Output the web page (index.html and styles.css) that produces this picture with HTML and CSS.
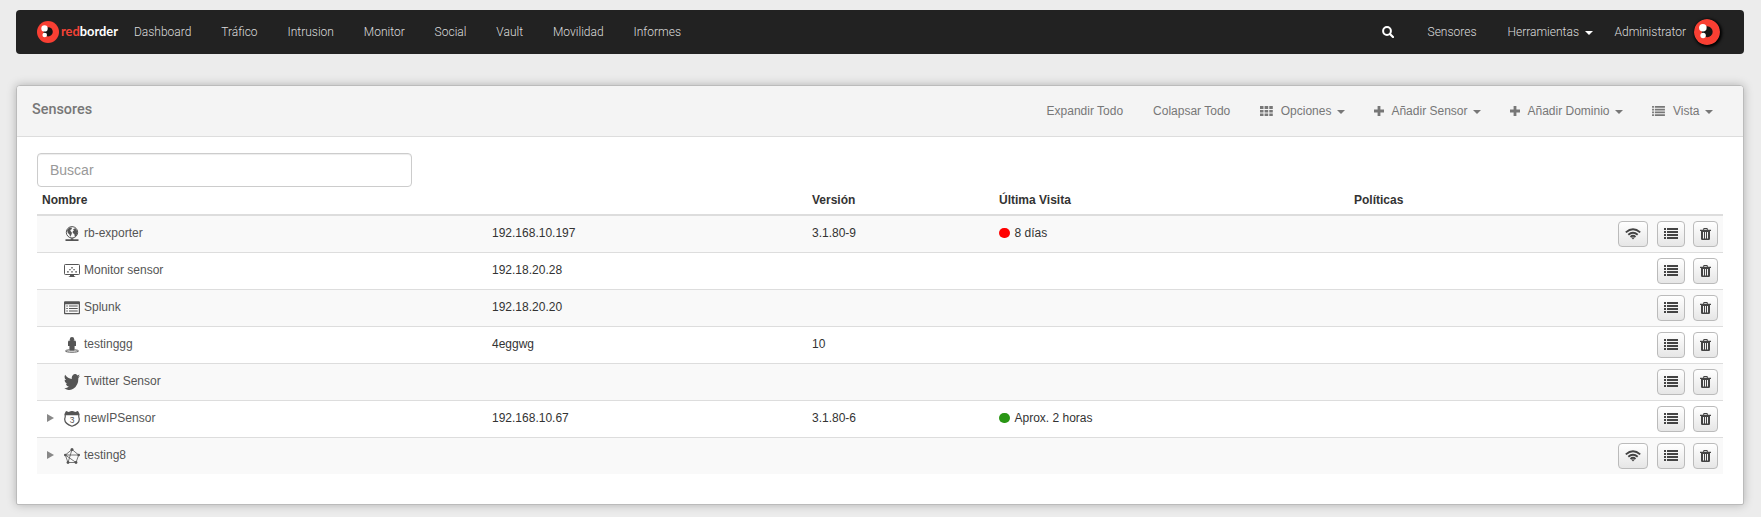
FILE: index.html
```html
<!DOCTYPE html>
<html lang="es">
<head>
<meta charset="utf-8">
<title>Sensores</title>
<link rel="stylesheet" href="styles.css">
</head>
<body>
<svg class="defs" width="0" height="0" aria-hidden="true">
  <symbol id="mark" viewBox="0 0 22 22">
    <circle cx="11" cy="11" r="11" fill="#f93f33"/>
    <circle cx="11.200" cy="10.800" r="4.600" fill="#151515"/>
    <circle cx="7.500" cy="7.400" r="3.200" fill="#fff"/>
    <circle cx="7.700" cy="14" r="2.300" fill="#fff"/>
  </symbol>
  <symbol id="list" viewBox="0 0 14 12">
    <path d="M0 0h2v2H0zM3 0h11v2H3zM0 3h2v2H0zM3 3h11v2H3zM0 6h2v2H0zM3 6h11v2H3zM0 9h2v2H0zM3 9h11v2H3z"/>
  </symbol>
  <symbol id="trash" viewBox="0 0 11 12">
    <path fill-rule="evenodd" d="M3.2 1.8V.9Q3.2 0 4.1 0h2.8q.9 0 .9.9v.9H11V3h-1v7.8Q10 12 8.8 12H2.2Q1 12 1 10.800V3H0V1.800zM4.200 1.800h2.600V1H4.200zM3 4v6.500h1V4zM5 4v6.500h1V4zM7 4v6.500h1V4z"/>
  </symbol>
  <symbol id="wifi" viewBox="0 0 16 12">
    <g fill="none" stroke="currentColor" stroke-width="1.9"><path d="M.8 4.400Q8-1.900 15.200 4.400"/><path d="M3.300 6.800Q8 2.800 12.700 6.800"/><path d="M5.500 8.900Q8 6.800 10.500 8.900"/></g>
    <path d="M6.400 9.800Q8 8.900 9.600 9.800L8 11.500z"/>
  </symbol>
  <symbol id="plus" viewBox="0 0 10 10"><path d="M3.600 0h2.800v3.600H10v2.800H6.400V10H3.600V6.400H0V3.600h3.600z"/></symbol>
  <symbol id="grid" viewBox="0 0 13 11">
    <path d="M0 0h3.500v3H0zM4.600 0h3.600v3H4.600zM9.300 0h3.500v3H9.300zM0 3.900h3.500v2.700H0zM4.600 3.900h3.600v2.700H4.600zM9.300 3.900h3.500v2.700H9.300zM0 7.400h3.500v2.700H0zM4.600 7.400h3.600v2.700H4.600zM9.300 7.400h3.500v2.700H9.300z"/>
  </symbol>
</svg>

<nav class="navbar">
  <a class="brand"><svg class="brand-mark"><use href="#mark"/></svg><svg class="brand-name" viewBox="0 0 58 20"><text class="brand-text" x="0" y="14" textLength="57" lengthAdjust="spacingAndGlyphs"><tspan class="red">red</tspan><tspan>border</tspan></text></svg></a>
  <div class="menu">
    <a>Dashboard</a><a>Tráfico</a><a>Intrusion</a><a>Monitor</a><a>Social</a><a>Vault</a><a>Movilidad</a><a>Informes</a>
  </div>
  <div class="menu menu-right">
    <a class="search"><svg width="12" height="12" viewBox="0 0 12 12"><circle cx="5" cy="5" r="3.900" fill="none" stroke="#fff" stroke-width="2"/><path d="M8 8l3 3" stroke="#fff" stroke-width="2.200" stroke-linecap="round"/></svg></a>
    <a>Sensores</a><a class="tools">Herramientas<i class="caret"></i></a><a class="admin">Administrator</a>
    <svg class="avatar"><use href="#mark"/></svg>
  </div>
</nav>

<section class="panel">
  <header class="panel-head">
    <h1>Sensores</h1>
    <div class="toolbar">
      <a>Expandir Todo</a>
      <a>Colapsar Todo</a>
      <a><svg class="ic-grid"><use href="#grid"/></svg>Opciones<i class="caret"></i></a>
      <a><svg class="ic-plus"><use href="#plus"/></svg>Añadir Sensor<i class="caret"></i></a>
      <a><svg class="ic-plus"><use href="#plus"/></svg>Añadir Dominio<i class="caret"></i></a>
      <a><svg class="ic-list"><use href="#list"/></svg>Vista<i class="caret"></i></a>
    </div>
  </header>
  <div class="panel-body">
    <input class="filter" type="text" placeholder="Buscar">
    <table class="sensors">
      <colgroup><col class="c-name"><col class="c-ip"><col class="c-version"><col class="c-visit"><col class="c-policy"><col></colgroup>
      <thead><tr><th>Nombre</th><th></th><th>Versión</th><th>Última Visita</th><th>Políticas</th><th></th></tr></thead>
      <tbody>
        <tr>
          <td><div class="name"><i class="toggle"></i><svg viewBox="0 0 16 16"><circle cx="8" cy="6.300" r="5.700" fill="none" stroke="currentColor"/><path d="M3 4.200L5.500 1.500 8 1.800 7.600 3.300 6.200 4.100 6.900 5.500 8 6.700 7.300 8.900 6.200 10.800 5.300 8.300 3.800 7 3.400 5.300zM9 3.200L11.200 2.300 13.300 5 13.400 7.500 12 10 10.800 10.800 10.300 8.100 8.700 7 8.800 5.300 10 4.500z"/><path d="M1.500 13.200h5.300v-1h2.500v1h5.200v1.900H1.500z"/></svg>rb-exporter</div></td>
          <td>192.168.10.197</td><td>3.1.80-9</td><td><div class="visit"><i class="dot down"></i>8 días</div></td><td></td>
          <td class="actions"><div><button class="b-wifi"><svg><use href="#wifi"/></svg></button><button class="b-list"><svg><use href="#list"/></svg></button><button class="b-trash"><svg><use href="#trash"/></svg></button></div></td>
        </tr>
        <tr>
          <td><div class="name"><i class="toggle"></i><svg viewBox="0 0 16 16"><rect x=".5" y="1.500" width="15" height="10" rx=".8" fill="none" stroke="currentColor"/><path d="M6 12h4v1.200h1.200V14H4.800v-.8H6zM7.300 4h1.400v1.400H7.300zM5.300 6h1.300v1.300H5.300zM9.400 6h1.300v1.300H9.400zM3 8.200h1.800v1.200H3zM7.200 8.200h1.600v1.200H7.200zM11.200 8.200H13v1.200h-1.800z"/></svg>Monitor sensor</div></td>
          <td>192.18.20.28</td><td></td><td></td><td></td>
          <td class="actions"><div><button class="b-list"><svg><use href="#list"/></svg></button><button class="b-trash"><svg><use href="#trash"/></svg></button></div></td>
        </tr>
        <tr>
          <td><div class="name"><i class="toggle"></i><svg viewBox="0 .7 16 16"><path fill-rule="evenodd" d="M1 2h14q1 0 1 1v11q0 1-1 1H1q-1 0-1-1V3q0-1 1-1zM1.200 5v8.800h13.600V5z"/><path d="M2.300 6.300h1.500v1H2.300zM5 6.300h8.700v1H5zM2.300 8.700h1.500v1H2.300zM5 8.700h8.700v1H5zM2.300 11.100h1.500v1H2.300zM5 11.100h8.700v1H5z"/></svg>Splunk</div></td>
          <td>192.18.20.20</td><td></td><td></td><td></td>
          <td class="actions"><div><button class="b-list"><svg><use href="#list"/></svg></button><button class="b-trash"><svg><use href="#trash"/></svg></button></div></td>
        </tr>
        <tr>
          <td><div class="name"><i class="toggle"></i><svg viewBox="0 0 16 16"><circle cx="8" cy="2.200" r="2.200"/><path d="M5.700 3.600h4.600q1.700 0 1.700 1.400V9h-1.400v4.700H5.400V9H4V5Q4 3.600 5.700 3.600z"/><path d="M5.500 12.800q-4 .3-4 1.200c0 1.600 13 1.600 13 0q0-.9-4-1.200" fill="none" stroke="currentColor"/></svg>testinggg</div></td>
          <td>4eggwg</td><td>10</td><td></td><td></td>
          <td class="actions"><div><button class="b-list"><svg><use href="#list"/></svg></button><button class="b-trash"><svg><use href="#trash"/></svg></button></div></td>
        </tr>
        <tr>
          <td><div class="name"><i class="toggle"></i><svg viewBox="0 2.200 24 19.600" preserveAspectRatio="none"><path d="M24 4.600a10 10 0 0 1-2.800.8 4.900 4.900 0 0 0 2.100-2.700 10 10 0 0 1-3.100 1.200 4.900 4.900 0 0 0-8.400 4.500A14 14 0 0 1 1.700 3.200a4.900 4.900 0 0 0 1.500 6.500 5 5 0 0 1-2.200-.6 4.900 4.900 0 0 0 3.900 4.900 5 5 0 0 1-2.200.1 4.900 4.900 0 0 0 4.600 3.400A9.900 9.900 0 0 1 0 19.500a14 14 0 0 0 21.500-12.400A10 10 0 0 0 24 4.600z"/></svg>Twitter Sensor</div></td>
          <td></td><td></td><td></td><td></td>
          <td class="actions"><div><button class="b-list"><svg><use href="#list"/></svg></button><button class="b-trash"><svg><use href="#trash"/></svg></button></div></td>
        </tr>
        <tr>
          <td><div class="name"><i class="toggle closed"></i><svg viewBox="0 0 16 16"><path d="M2.300.8L4.500 1.500 8 .6l3.500.9L13.700.8 15 3.300Q14.400 5 15.200 7.500 16 12.500 8 15.300 0 12.500.8 7.500 1.600 5 1 3.300z" fill="none" stroke="currentColor" stroke-width="1.200"/><path d="M2.300.6L4.500 1.300 8 .3l3.500 1L13.700.6 15.300 4.300H.7z"/><text x="8" y="11.700" text-anchor="middle" class="shield-num">3</text></svg>newIPSensor</div></td>
          <td>192.168.10.67</td><td>3.1.80-6</td><td><div class="visit"><i class="dot up"></i>Aprox. 2 horas</div></td><td></td>
          <td class="actions"><div><button class="b-list"><svg><use href="#list"/></svg></button><button class="b-trash"><svg><use href="#trash"/></svg></button></div></td>
        </tr>
        <tr>
          <td><div class="name"><i class="toggle closed"></i><svg viewBox="0 0 16 16"><path d="M8 1.500L14.700 7 12 14.500H4L1.300 7zM1.300 7L14.700 7M1.300 7L12 14.500M8 1.500L4 14.500" fill="none" stroke="currentColor" stroke-width=".8"/><circle cx="8" cy="1.600" r="1.500"/><circle cx="14.700" cy="7" r="1.300"/><circle cx="12" cy="14.500" r="1.400"/><circle cx="4" cy="14.500" r="1.400"/><circle cx="1.300" cy="7" r="1.300"/></svg>testing8</div></td>
          <td></td><td></td><td></td><td></td>
          <td class="actions"><div><button class="b-wifi"><svg><use href="#wifi"/></svg></button><button class="b-list"><svg><use href="#list"/></svg></button><button class="b-trash"><svg><use href="#trash"/></svg></button></div></td>
        </tr>
      </tbody>
    </table>
  </div>
</section>
</body>
</html>
```
FILE: styles.css
```css
* { box-sizing: border-box; }
html { background: #ececec; }
body {
  margin: 0;
  padding: 10px 17px 0 16px;
  height: 517px;
  overflow: hidden;
  background: #ececec;
  color: #333;
  font: 12px/17px "Liberation Sans", Arial, sans-serif;
}
.defs { display: block; width: 0; height: 0; }
svg { display: block; flex: none; fill: currentColor; }

.navbar {
  display: flex;
  align-items: center;
  height: 44px;
  padding: 0 24px 0 20.7px;
  background: #222;
  border-radius: 4px;
  color: #ddd;
  font: 300 12px/18px Roboto, sans-serif;
}
.brand { display: flex; align-items: center; gap: 2px; width: 97.3px; }
.brand-mark { width: 22px; height: 22px; }
.brand-name { width: 58px; height: 20px; }
.brand-text { font: 700 12.5px Lato, sans-serif; fill: #fff; }
.brand-text .red { fill: #f44336; }
.menu { display: flex; align-items: center; gap: 29.9px; }
.menu-right { margin-left: auto; gap: 0; }
.menu-right a { margin-right: 31px; }
.menu-right .search { margin-right: 34px; }
.menu-right .tools { display: flex; align-items: center; margin-right: 22px; }
.tools .caret { color: #fff; margin-right: 0; }
.menu-right .admin { margin-right: 8px; }
.avatar { width: 26px; height: 26px; border-radius: 50%; box-shadow: 1px 1px 3px 1px #000; }

.caret {
  width: 0;
  height: 0;
  margin: 2px -1px 0 5.5px;
  border: 4px solid transparent;
  border-top-color: currentColor;
  border-bottom: 0;
}

.panel {
  height: 420px;
  margin-top: 31px;
  background: #fff;
  border: 1px solid #bbb;
  border-radius: 4px 4px 2px 2px;
  box-shadow: 0 0 10px rgba(0, 0, 0, .25);
}
.panel-head {
  display: flex;
  align-items: center;
  justify-content: space-between;
  height: 51px;
  padding: 0 31px 0 15px;
  background: #f4f4f4;
  border-bottom: 1px solid #ddd;
  border-radius: 3px 3px 0 0;
  color: #777;
}
.panel-head h1 { margin: 0 0 2px; font: 500 14.4px/18px Roboto, sans-serif; }
.toolbar { display: flex; gap: 30px; }
.toolbar a { display: flex; align-items: center; }
.ic-grid { width: 13px; height: 11px; margin-right: 7.5px; }
.ic-plus { width: 10px; height: 10px; margin-right: 7.5px; }
.ic-list { width: 13px; height: 11px; margin-right: 8px; }

.panel-body { padding: 16px 20px 0; }
.filter {
  display: block;
  width: 375px;
  height: 34px;
  padding: 6px 12px;
  border: 1px solid #ccc;
  border-radius: 4px;
  box-shadow: inset 0 1px 1px rgba(0, 0, 0, .075);
  font: 14px/20px "Liberation Sans", Arial, sans-serif;
}
.filter::placeholder { color: #999; opacity: 1; }

.sensors { width: 1686px; table-layout: fixed; border-collapse: separate; border-spacing: 0; }
.c-name { width: 450px; }
.c-ip { width: 320px; }
.c-version { width: 187px; }
.c-visit { width: 355px; }
.c-policy { width: 200px; }
.sensors th {
  height: 29px;
  padding: 5px 5px 5px;
  border-bottom: 2px solid #ddd;
  text-align: left;
  vertical-align: top;
}
.sensors td { height: 37px; padding: 9px 5px 0; border-top: 1px solid #ddd; vertical-align: top; }
.sensors tbody tr:first-child td { height: 36px; border-top: 0; }
.sensors tbody tr:nth-child(odd) { background: #f9f9f9; }
.name { display: flex; height: 17px; color: #555; }
.name svg { width: 16px; height: 16px; margin: 1px 4px 0 0; }
.shield-num { font: 8.500px "Liberation Sans", Arial, sans-serif; }
.toggle { width: 22px; padding: 4px 0 0 5px; }
.toggle.closed::before {
  content: "";
  display: block;
  width: 0;
  border: 4.500px solid transparent;
  border-left: 7.500px solid #888;
  border-right: 0;
}
.visit { display: flex; }
.dot { width: 10.5px; height: 10.5px; margin: 2.5px 5px 0 0; border-radius: 50%; }
.down { background: #f00; }
.up { background: #2a9614; }

.sensors td.actions { padding: 5px 5px 0; }
.actions div { display: flex; justify-content: flex-end; }
.actions button {
  display: flex;
  align-items: center;
  justify-content: center;
  height: 26px;
  padding: 0;
  border: 1px solid #bbb;
  border-radius: 4px;
  background: linear-gradient(#fff, #e6e6e6);
  color: #444;
}
.actions .b-wifi { width: 30px; margin-right: 9px; }
.actions .b-list { width: 28px; margin-right: 8px; }
.actions .b-trash { width: 25px; }
.b-wifi svg { width: 16px; height: 12px; }
.b-list svg { width: 14px; height: 12px; }
.b-trash svg { width: 11px; height: 12px; }
```
